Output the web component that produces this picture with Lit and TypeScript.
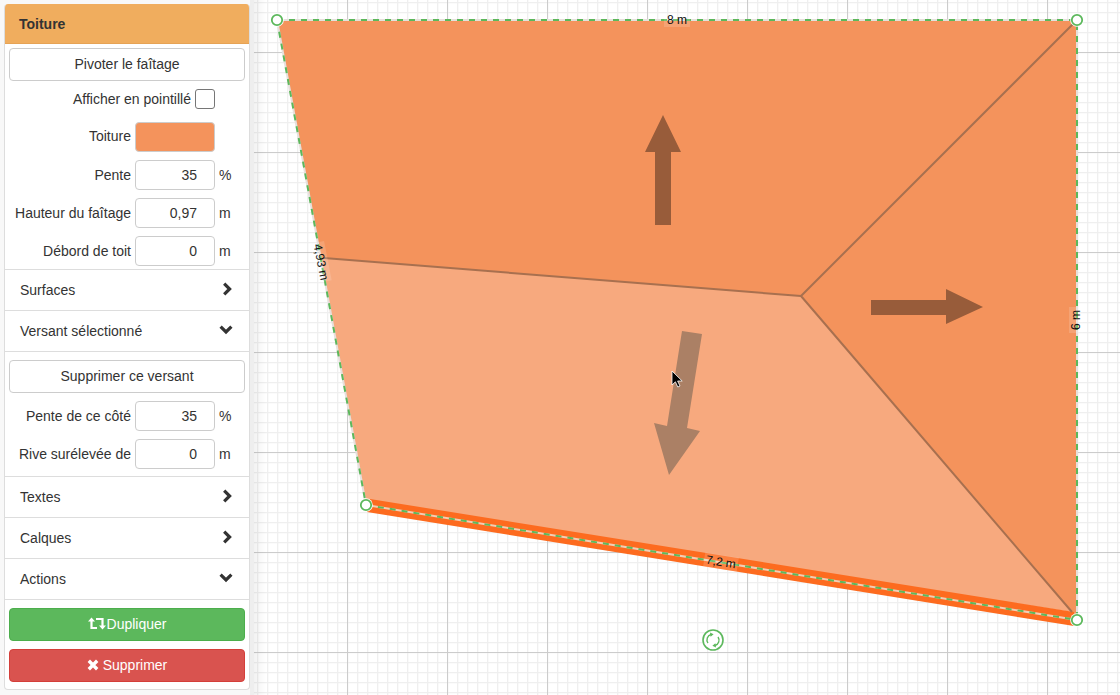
import { LitElement, html, css, svg } from "lit";
import { customElement } from "lit/decorators.js";

const chevronRight = html`<svg class="chev" width="12" height="14" viewBox="0 0 12 14"><path d="M3.2 1.6 8.6 7 3.2 12.4" fill="none" stroke="#333" stroke-width="3.2"/></svg>`;
const chevronDown = html`<svg class="chev" width="14" height="12" viewBox="0 0 14 12"><path d="M1.6 2.6 7 8 12.4 2.6" fill="none" stroke="#333" stroke-width="3.2"/></svg>`;

@customElement("app-root")
export class AppRoot extends LitElement {
  static styles = css`
    :host { display: block; width: 1120px; height: 695px; overflow: hidden; font-family: "Liberation Sans", Arial, sans-serif; font-size: 14px; color: #333; }
    * { box-sizing: border-box; }
    .page { display: flex; height: 695px; background: #fff; }
    .side { width: 254px; flex: none; padding: 4px 0 5px 4px; background: #f8f8f8; border-right: 4px solid #eeeeee; }
    .panel { width: 246px; height: 686px; background: #fff; border: 1px solid #ddd; border-top: 0; border-radius: 4px; display: flex; flex-direction: column; overflow: hidden; }
    .head { height: 40px; flex: none; margin: 0 -1px; background: #f0ad5e; border-bottom: 1px solid #e6a355; padding: 0 15px; display: flex; align-items: center; font-weight: 700; color: #333; }
    .body { padding: 4px 4px 0; display: flex; flex-direction: column; }
    .btn { height: 33px; width: 236px; border: 1px solid #ccc; border-radius: 4px; background: #fff; color: #333; font: inherit; display: flex; align-items: center; justify-content: center; gap: 2px; padding: 0 0 2px; }
    .row { display: flex; align-items: center; justify-content: flex-start; gap: 4px; height: 30px; margin-top: 8px; }
    .row label { width: 122px; text-align: right; white-space: nowrap; flex: none; padding-bottom: 1px; }
    .row.first label { padding-bottom: 2px; }
    .input { width: 80px; height: 30px; flex: none; border: 1px solid #ccc; border-radius: 4px; background: #fff; color: #333; font: inherit; text-align: right; padding: 0 17px 1px 0; }
    .swatch { background: #f4935c; }
    .unit { padding-bottom: 1px; }
    .check-row { display: flex; align-items: center; justify-content: flex-end; gap: 4px; height: 20px; margin-top: 8px; padding-right: 30px; }
    .check-row span:first-child { padding-bottom: 1px; }
    .check { width: 20px; height: 20px; border: 1px solid #767676; border-radius: 3px; background: #fff; }
    .first { margin-top: 13px; }
    .sec { height: 41px; flex: none; padding: 0 16px 0 15px; border-top: 1px solid #ddd; display: flex; align-items: center; justify-content: space-between; }
    .sec.after-form { margin-top: 3px; }
    .sec.after-side { margin-top: 7px; }
    .sec .chev { display: block; margin-top: -3px; }
    .actions { border-top: 1px solid #ddd; padding: 8px 4px 0; display: flex; flex-direction: column; gap: 8px; }
    .green { background: #5cb85c; border-color: #4cae4c; color: #fff; gap: 1px; }
    .red { background: #d9534f; border-color: #d43f3a; color: #fff; gap: 4px; }
    .gap-top { border-top: 1px solid #ddd; padding: 8px 4px 0; }
    .canvas { flex: 1; display: block; position: relative; }
    svg.draw { display: block; width: 866px; height: 695px; }
    .lbl { font: 12px "Liberation Sans", Arial, sans-serif; fill: #111; }
  `;

  private numRow(label: string, value: string, unit: string) {
    return html`<div class="row"><label>${label}</label><input class="input" .value=${value} readonly /><span class="unit">${unit}</span></div>`;
  }

  private section(label: string, open: boolean, cls = "") {
    return html`<div class="sec ${cls}"><span>${label}</span>${open ? chevronDown : chevronRight}</div>`;
  }

  private label(x: number, y: number, rot: number, w: number, t: string) {
    return svg`<g transform="translate(${x} ${y}) rotate(${rot})">
      <rect x=${-w / 2} y="-7" width=${w} height="14" fill="#fff" opacity=".15"/>
      <text class="lbl" text-anchor="middle" y="4">${t}</text></g>`;
  }

  private drawing() {
    const edge = (d: string) => svg`
      <path d=${d} fill="none" stroke="#e6e0dc" stroke-width="2"/>
      <path d=${d} fill="none" stroke="#5cb85c" stroke-width="2" stroke-dasharray="6 6"/>`;
    const handle = (x: number, y: number) => svg`
      <circle cx=${x} cy=${y} r="6.8" fill="#fff"/>
      <circle cx=${x} cy=${y} r="5.2" fill="#fff" stroke="#5cb85c" stroke-width="1.8"/>`;
    return svg`
      <defs>
        <pattern id="minor" width="10" height="10" patternUnits="userSpaceOnUse" x="3" y="2">
          <path d="M.5 0V10M0 .5H10" stroke="#efefef" stroke-width="1.6" fill="none"/>
        </pattern>
        <pattern id="major" width="100" height="100" patternUnits="userSpaceOnUse" x="93" y="52">
          <path d="M.5 0V100M0 .5H100" stroke="#cccccc" stroke-width="1" fill="none"/>
        </pattern>
        <linearGradient id="fade" x1="0" x2="1" y1="0" y2="0">
          <stop offset="0" stop-color="#000" stop-opacity=".05"/>
          <stop offset="1" stop-color="#000" stop-opacity="0"/>
        </linearGradient>
      </defs>
      <rect width="866" height="695" fill="#fff"/>
      <rect width="866" height="695" fill="url(#minor)"/>
      <rect width="866" height="695" fill="url(#major)"/>
      <rect width="13" height="695" fill="url(#fade)"/>
      <g transform="translate(-254 0)">
        <polygon points="277,20 1077,20 1077,620 801,296 321,258" fill="#f4935c"/>
        <polygon points="321,258 801,296 1072,612 366,505" fill="#f7a97e"/>
        <polygon points="370,499 1074,612 1074,626 367,512" fill="#fd6b1f"/>
        <path d="M324 258 801 296M1077 20 801 296M801 296 1072 612" fill="none" stroke="#a8704f" stroke-width="2"/>
        <polygon points="655,225 671,225 671,152 681,152 663,115 645,152 655,152" fill="#985c3a"/>
        <polygon points="871,300 946,300 946,289 983,307 946,324 946,315 871,315" fill="#985c3a"/>
        <polygon points="682,331 702,334 687,428 700,431 669,475 654,423 667,426" fill="#ab8065"/>
        ${edge("M277 20H1077V620")}
        ${edge("M277 20 366 505")}
        <path d="M366 505 1077 620" fill="none" stroke="#f3cdb4" stroke-width="2"/>
        <path d="M366 505 1077 620" fill="none" stroke="#5cb85c" stroke-width="2" stroke-dasharray="6 6"/>
        ${this.label(677, 20, 0, 26, "8 m")}
        ${this.label(321, 262, 79, 40, "4,93 m")}
        ${this.label(1076, 320, -90, 26, "6 m")}
        ${this.label(721, 562, 9, 34, "7,2 m")}
        ${handle(277, 20)}${handle(1077, 20)}${handle(366, 505)}${handle(1077, 620)}
        <circle cx="713" cy="640" r="10" fill="#fff" stroke="#5cb85c" stroke-width="1.6"/>
        <path d="M708 643a5.5 5.5 0 0 1 3-8.5M718 637a5.5 5.5 0 0 1-3 8.5" fill="none" stroke="#5cb85c" stroke-width="1.4"/>
        <path d="M710 632.5l3.6 1.8-3 2.4zM716 647.5l-3.6-1.8 3-2.4z" fill="#5cb85c"/>
        <path d="M672 371v14l3.4-3.2 2.4 5.2 2.2-1-2.4-5h4.6z" fill="#000" stroke="#fff" stroke-width=".8"/>
      </g>`;
  }

  render() {
    return html`<div class="page">
      <aside class="side">
        <div class="panel">
          <div class="head">Toiture</div>
          <div class="body">
            <button class="btn">Pivoter le faîtage</button>
            <div class="check-row"><span>Afficher en pointillé</span><span class="check"></span></div>
            <div class="row first"><label>Toiture</label><span class="input swatch"></span></div>
            ${this.numRow("Pente", "35", "%")}
            ${this.numRow("Hauteur du faîtage", "0,97", "m")}
            ${this.numRow("Débord de toit", "0", "m")}
          </div>
          ${this.section("Surfaces", false, "after-form")}
          ${this.section("Versant sélectionné", true)}
          <div class="gap-top">
            <button class="btn">Supprimer ce versant</button>
            ${this.numRow("Pente de ce côté", "35", "%")}
            ${this.numRow("Rive surélevée de", "0", "m")}
          </div>
          ${this.section("Textes", false, "after-side")}
          ${this.section("Calques", false)}
          ${this.section("Actions", true)}
          <div class="actions">
            <button class="btn green">
              <svg width="18" height="13" viewBox="0 0 18 13"><path d="M3.5 3v8H9M8 2h6.5v8" fill="none" stroke="#fff" stroke-width="2.2"/><path d="M0 4.4 3.5 .6 7 4.4zM11 8.6h7L14.5 12.4z" fill="#fff"/></svg>
              Dupliquer
            </button>
            <button class="btn red">
              <svg width="12" height="12" viewBox="0 0 12 12"><path d="M1.8 1.8 10.2 10.2M10.2 1.8 1.8 10.2" stroke="#fff" stroke-width="3.4"/></svg>
              Supprimer
            </button>
          </div>
        </div>
      </aside>
      <main class="canvas"><svg class="draw" viewBox="0 0 866 695">${this.drawing()}</svg></main>
    </div>`;
  }
}
